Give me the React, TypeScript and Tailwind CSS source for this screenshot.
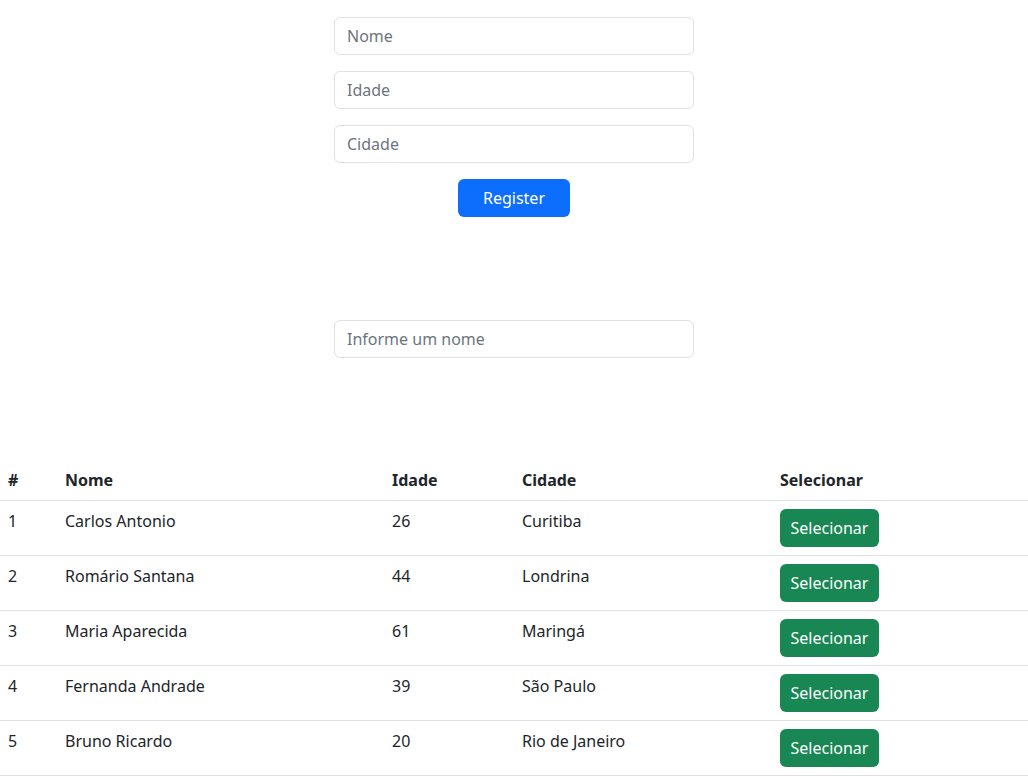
const people = [
  { id: 1, nome: "Carlos Antonio", idade: 26, cidade: "Curitiba" },
  { id: 2, nome: "Romário Santana", idade: 44, cidade: "Londrina" },
  { id: 3, nome: "Maria Aparecida", idade: 61, cidade: "Maringá" },
  { id: 4, nome: "Fernanda Andrade", idade: 39, cidade: "São Paulo" },
  { id: 5, nome: "Bruno Ricardo", idade: 20, cidade: "Rio de Janeiro" },
];

const inputCls =
  "block w-full h-[38px] px-3 rounded-md border border-[#dee2e6] bg-white text-base text-[#212529] placeholder:text-[#6c757d] outline-none";

export default function App() {
  return (
    <div className="min-h-screen bg-white text-[#212529] font-['Noto_Sans',sans-serif] text-base">
      <form className="w-[360px] mx-auto pt-[17px] flex flex-col">
        <input className={inputCls} placeholder="Nome" />
        <input className={inputCls + " mt-4"} placeholder="Idade" />
        <input className={inputCls + " mt-4"} placeholder="Cidade" />
        <div className="flex justify-center mt-4">
          <button
            type="button"
            className="w-[112px] h-[38px] rounded-md bg-[#0d6efd] text-white text-base"
          >
            Register
          </button>
        </div>
      </form>

      <div className="w-[360px] mx-auto mt-[103px]">
        <input className={inputCls} placeholder="Informe um nome" />
      </div>

      <table className="w-full table-fixed mt-[102px] border-collapse">
        <thead>
          <tr className="border-b border-[#dee2e6]">
            <th className="w-[57px] p-2 text-left font-bold">#</th>
            <th className="w-[327px] p-2 text-left font-bold">Nome</th>
            <th className="w-[130px] p-2 text-left font-bold">Idade</th>
            <th className="w-[258px] p-2 text-left font-bold">Cidade</th>
            <th className="p-2 text-left font-bold">Selecionar</th>
          </tr>
        </thead>
        <tbody>
          {people.map((p) => (
            <tr key={p.id} className="border-b border-[#dee2e6]">
              <td className="p-2 align-top">{p.id}</td>
              <td className="p-2 align-top">{p.nome}</td>
              <td className="p-2 align-top">{p.idade}</td>
              <td className="p-2 align-top">{p.cidade}</td>
              <td className="p-2 align-top">
                <button
                  type="button"
                  className="w-[99px] h-[38px] rounded-md bg-[#198754] text-white text-base"
                >
                  Selecionar
                </button>
              </td>
            </tr>
          ))}
        </tbody>
      </table>
    </div>
  );
}
